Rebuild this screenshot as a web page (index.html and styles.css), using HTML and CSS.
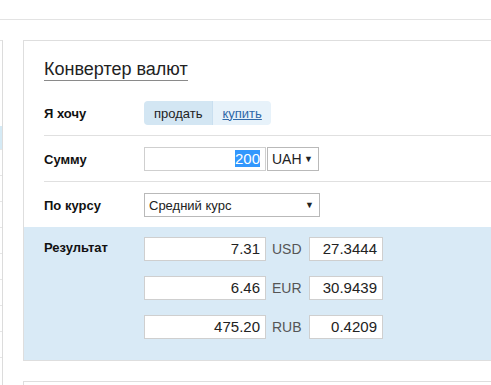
FILE: index.html
```html
<!DOCTYPE html>
<html lang="ru">
<head>
    <meta charset="UTF-8">
    <title>Конвертер валют</title>
    <link rel="stylesheet" href="styles.css">
</head>
<body>
    <div class="topbar"></div>
    <div class="layout">
        <ul class="sidebar">
            <li></li>
            <li></li>
            <li></li>
            <li class="active"></li>
            <li></li>
            <li></li>
            <li></li>
            <li></li>
            <li></li>
            <li></li>
            <li></li>
            <li></li>
        </ul>
        <div class="main">
            <div class="card">
                <h2 class="card-title">Конвертер валют</h2>

                <div class="row first">
                    <div class="label">Я хочу</div>
                    <div class="toggle">
                        <span class="toggle-item selected">продать</span>
                        <a class="toggle-item" href="#">купить</a>
                    </div>
                </div>

                <div class="row">
                    <div class="label">Сумму</div>
                    <div class="field amount"><span class="selection">200</span></div>
                    <div class="select currency">UAH <span class="arrow">▼</span></div>
                </div>

                <div class="row last">
                    <div class="label">По курсу</div>
                    <div class="select rate-type">Средний курс <span class="arrow">▼</span></div>
                </div>

                <div class="result">
                    <div class="label">Результат</div>
                    <div class="result-list">
                        <div class="result-row">
                            <div class="field amount">7.31</div>
                            <span class="code">USD</span>
                            <div class="field rate">27.3444</div>
                        </div>
                        <div class="result-row">
                            <div class="field amount">6.46</div>
                            <span class="code">EUR</span>
                            <div class="field rate">30.9439</div>
                        </div>
                        <div class="result-row">
                            <div class="field amount">475.20</div>
                            <span class="code">RUB</span>
                            <div class="field rate">0.4209</div>
                        </div>
                    </div>
                </div>
            </div>
            <div class="card next"></div>
        </div>
    </div>
</body>
</html>
```

FILE: styles.css
```css
body {
    font-family: "Liberation Sans", Arial, sans-serif;
    background-color: #fff;
    color: #222;
    margin: 0;
    padding: 0;
    height: 385px;
    overflow: hidden;
}
.topbar {
    height: 19px;
    border-bottom: 1px solid #e3e3e3;
}
.layout {
    display: flex;
    gap: 20px;
    margin-top: 20px;
    overflow: hidden;
}
.sidebar {
    list-style: none;
    margin: 0;
    padding: 0;
    width: 2px;
    flex-shrink: 0;
    border-top: 1px solid #e3e3e3;
    border-right: 1px solid #dcdcdc;
}
.sidebar li {
    height: 25px;
    border-bottom: 1px solid #e6e6e6;
}
.sidebar li:first-child {
    height: 61px;
    border-bottom: none;
}
.sidebar li:nth-child(2),
.sidebar li:nth-child(3) {
    height: 12px;
    border-bottom: none;
}
.sidebar li.active {
    height: 23px;
    background: #d5eaf5;
    border-bottom: 1px solid #e6e6e6;
}
.main {
    flex: 1;
    margin-right: -40px;
}
.card {
    border: 1px solid #dedede;
    background: #fff;
}
.card.next {
    margin-top: 20px;
    height: 4px;
    border-bottom: none;
}
.card-title {
    width: fit-content;
    margin: 18px 0 0 20px;
    font-size: 18px;
    font-weight: normal;
    line-height: 21px;
    color: #222;
    border-bottom: 1px solid #8a8a8a;
}
.row {
    display: flex;
    align-items: center;
    margin: 0 0 0 20px;
    padding: 11px 0 10px;
    height: 24px;
    border-bottom: 1px solid #e0e0e0;
}
.row.first {
    margin-top: 9px;
}
.row.last {
    padding-bottom: 10px;
    border-bottom: none;
}
.label {
    width: 100px;
    flex-shrink: 0;
    font-size: 13px;
    font-weight: bold;
    color: #111;
}
.toggle {
    display: flex;
    height: 24px;
    border-radius: 4px;
    overflow: hidden;
    font-size: 13px;
}
.toggle-item {
    display: flex;
    align-items: center;
    padding: 0 9px;
    background: #e7f2fa;
    color: #2f68a8;
}
.toggle-item.selected {
    padding: 0 10px;
    background: #d3e6f3;
    color: #222;
    border-right: 1px solid #c9dff0;
}
.field {
    box-sizing: border-box;
    height: 24px;
    border: 1px solid #cfcfcf;
    background: #fff;
    text-align: right;
    font-size: 15px;
    line-height: 22px;
    padding: 0 5px;
    color: #222;
}
.field.amount {
    width: 122px;
}
.field.rate {
    width: 74px;
}
.selection {
    background: #3297fd;
    color: #fff;
}
.select {
    box-sizing: border-box;
    height: 24px;
    border: 1px solid #b9b9b9;
    background: #fff;
    display: flex;
    align-items: center;
    justify-content: space-between;
    padding: 0 5px 0 4px;
    color: #222;
}
.select .arrow {
    font-size: 9px;
}
.select.currency {
    width: 52px;
    margin-left: 1px;
    font-size: 14px;
}
.select.rate-type {
    width: 176px;
    font-size: 13px;
}
.result {
    display: flex;
    align-items: flex-start;
    background: #d9eaf6;
    padding: 10px 0 21px 20px;
}
.result .label {
    padding-top: 3px;
}
.result-list {
    display: flex;
    flex-direction: column;
    gap: 15px;
}
.result-row {
    display: flex;
    align-items: center;
}
.code {
    width: 37px;
    padding-left: 6px;
    font-size: 14px;
    color: #555;
}
```
